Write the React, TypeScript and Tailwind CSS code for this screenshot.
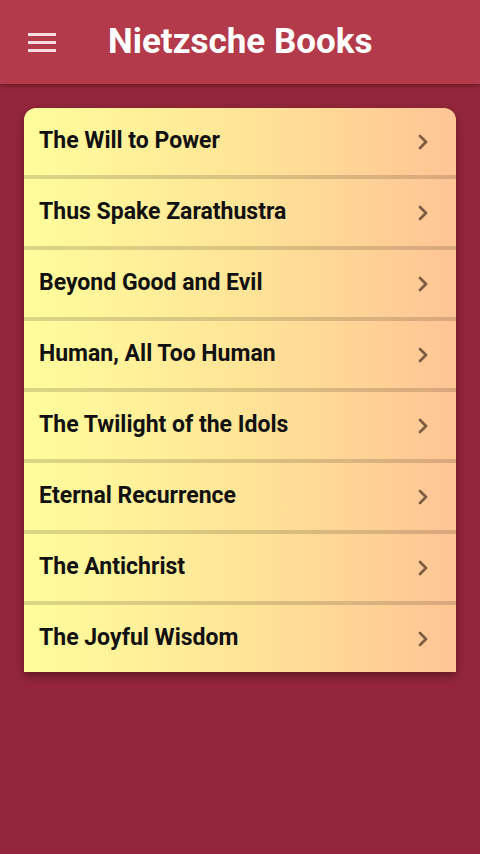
import React from 'react';

const books = [
  'The Will to Power',
  'Thus Spake Zarathustra',
  'Beyond Good and Evil',
  'Human, All Too Human',
  'The Twilight of the Idols',
  'Eternal Recurrence',
  'The Antichrist',
  'The Joyful Wisdom',
];

const Chevron = () => (
  <svg width="24" height="24" viewBox="0 0 24 24" fill="none" stroke="currentColor" strokeWidth="2.8" strokeLinecap="round" strokeLinejoin="round">
    <polyline points="9 6 15 12 9 18" />
  </svg>
);

export default function App() {
  return (
    <div className="w-[480px] h-[854px] bg-[#93263a] flex flex-col" style={{ fontFamily: 'Roboto, "Noto Sans", sans-serif' }}>
      <header className="h-[84px] bg-[#b33a4a] flex items-center shadow-[0_2px_4px_rgba(0,0,0,0.3)] relative z-10">
        <div className="ml-[28px] w-[28px] flex flex-col gap-[5px]">
          <span className="block h-[3px] bg-[#f6dde0]" />
          <span className="block h-[3px] bg-[#f6dde0]" />
          <span className="block h-[3px] bg-[#f6dde0]" />
        </div>
        <h1 className="ml-[52px] text-white text-[35px] font-bold">Nietzsche Books</h1>
      </header>
      <div className="px-[24px] pt-[24px]">
        <ul className="rounded-t-[12px] overflow-hidden bg-gradient-to-r from-[#fffd9c] via-[#ffe597] to-[#ffc495] shadow-[0_4px_10px_rgba(0,0,0,0.35)]">
          {books.map((b, i) => (
            <li
              key={b}
              className={`h-[67px] flex items-center justify-between pl-[15px] pr-[21px] text-[23px] font-bold text-[#111] ${i < books.length - 1 ? 'box-content border-b-[4px] border-black/15' : ''}`}
            >
              <span>{b}</span>
              <span className="text-[#7d5c42]"><Chevron /></span>
            </li>
          ))}
        </ul>
      </div>
    </div>
  );
}
